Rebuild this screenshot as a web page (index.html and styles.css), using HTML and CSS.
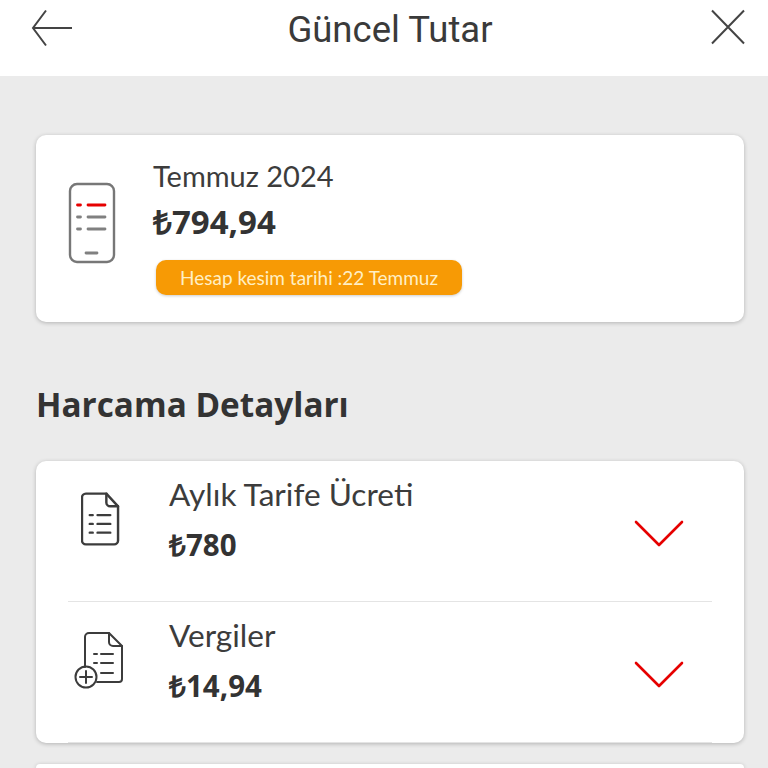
FILE: index.html
```html
<!DOCTYPE html>
<html lang="tr">
<head>
  <meta charset="UTF-8">
  <title>Güncel Tutar</title>
  <link rel="stylesheet" href="styles.css">
</head>
<body>
  <header class="topbar">
    <svg class="back-icon" width="42" height="38" viewBox="0 0 42 38" fill="none" stroke="#444" stroke-width="2">
      <path d="M41 19H2M15 1.500L2 19l13 17.500"/>
    </svg>
    <h1 class="topbar-title">Güncel Tutar</h1>
    <svg class="close-icon" width="36" height="36" viewBox="0 0 36 36" fill="none" stroke="#444" stroke-width="2">
      <path d="M2 1.500l32 33M34 1.500l-32 33"/>
    </svg>
  </header>

  <main class="content">
    <section class="card summary">
      <svg class="summary-icon" width="48" height="82" viewBox="0 0 48 82" fill="none" stroke-width="2.400" stroke-linecap="round">
        <rect x="2" y="2" width="44" height="78" rx="7" stroke="#777"/>
        <path d="M9.500 23h3M20 23h17" stroke="#e60000" stroke-width="2.800"/>
        <path d="M9.500 35h3M20 35h17M9.500 47h3M20 47h17M18 71h11" stroke="#808080" stroke-width="2.800"/>
      </svg>
      <div class="summary-text">
        <div class="summary-month">Temmuz 2024</div>
        <div class="summary-price">₺794,94</div>
        <div class="badge">Hesap kesim tarihi :22 Temmuz</div>
      </div>
    </section>

    <h2 class="section-title">Harcama Detayları</h2>

    <section class="card details">
      <div class="detail-row">
        <div class="detail-icon">
          <svg width="39" height="56" viewBox="0 0 40 56" fill="none" stroke="#3c3c3c" stroke-width="2.500" stroke-linecap="round" stroke-linejoin="round">
            <path d="M5 2h21l12 13v35a4 4 0 0 1-4 4H5a4 4 0 0 1-4-4V6a4 4 0 0 1 4-4z"/>
            <path d="M26 2v9a4 4 0 0 0 4 4h8"/>
            <path d="M9 24h3M17 24h13M9 33h3M17 33h13M9 42h3M17 42h13"/>
          </svg>
        </div>
        <div class="detail-text">
          <div class="detail-name">Aylık Tarife Ücreti</div>
          <div class="detail-price">₺780</div>
        </div>
        <svg class="chevron" width="50" height="27" viewBox="0 0 50 27" fill="none" stroke="#e60000" stroke-width="2.600" stroke-linecap="round" stroke-linejoin="round">
          <path d="M2 2l23 23L48 2"/>
        </svg>
      </div>
      <div class="detail-row">
        <div class="detail-icon">
          <svg width="50" height="58" viewBox="0 0 50 58" fill="none" stroke="#3c3c3c" stroke-width="2" stroke-linecap="round" stroke-linejoin="round">
            <path d="M11 36V6a4 4 0 0 1 4-4h20l13 13v33a3 3 0 0 1-3 3H23"/>
            <path d="M35 2v9a4 4 0 0 0 4 4h9"/>
            <path d="M20 23h3M27 23h12M20 32h3M27 32h12M27 42h12"/>
            <circle cx="12" cy="46" r="10.500"/>
            <path d="M12 40v12M6 46h12"/>
          </svg>
        </div>
        <div class="detail-text">
          <div class="detail-name">Vergiler</div>
          <div class="detail-price">₺14,94</div>
        </div>
        <svg class="chevron" width="50" height="27" viewBox="0 0 50 27" fill="none" stroke="#e60000" stroke-width="2.600" stroke-linecap="round" stroke-linejoin="round">
          <path d="M2 2l23 23L48 2"/>
        </svg>
      </div>
    </section>

    <section class="card next-card"></section>
  </main>
</body>
</html>
```

FILE: styles.css
```css
html, body {
  margin: 0;
  height: 768px;
  overflow: hidden;
}

body {
  background: #ebebeb;
  color: #333;
  font-family: "Lato", "Open Sans", sans-serif;
}

.topbar {
  height: 76px;
  background: #fff;
  display: flex;
  align-items: flex-start;
  justify-content: space-between;
  padding: 9px 22px 0 31px;
  box-sizing: border-box;
}

.topbar-title {
  margin: 1px 3px 0 0;
  font-family: "Roboto", sans-serif;
  font-size: 36.500px;
  line-height: 40px;
  font-weight: 400;
  color: #3a3a3a;
}

.content {
  padding: 59px 24px 0 36px;
}

.card {
  background: #fff;
  border-radius: 10px;
  box-shadow: 0 1px 4px rgba(0, 0, 0, 0.24);
}

.summary {
  height: 187px;
  display: flex;
  align-items: flex-start;
  padding: 47px 0 0 32px;
  box-sizing: border-box;
}

.summary-text {
  margin: -28px 0 0 37px;
}

.summary-month {
  font-size: 29px;
  line-height: 44px;
  color: #3c3c3c;
}

.summary-price {
  font-family: "Open Sans", sans-serif;
  font-size: 33px;
  line-height: 48px;
  font-weight: 700;
  color: #333;
}

.badge {
  margin: 14px 0 0 3px;
  width: 306px;
  height: 35px;
  line-height: 36px;
  border-radius: 10px;
  background: #f79a05;
  color: #ffefc4;
  font-size: 19px;
  text-align: center;
  box-shadow: 0 1px 3px rgba(0, 0, 0, 0.2);
}

.section-title {
  margin: 59px 0 34px 0;
  font-family: "Open Sans", sans-serif;
  font-size: 33.300px;
  line-height: 46px;
  font-weight: 700;
  color: #333;
}

.details {
  padding: 0 32px;
  height: 282px;
  box-sizing: border-box;
}

.detail-row {
  height: 140px;
  display: flex;
  border-bottom: 1px solid #e4e4e4;
}

.detail-icon {
  width: 101px;
  padding: 30px 0 0 13px;
  box-sizing: border-box;
}

.detail-row + .detail-row .detail-icon {
  padding: 29px 0 0 6px;
}

.detail-text {
  flex: 1;
  padding-top: 10px;
}

.detail-name {
  font-size: 31.600px;
  line-height: 46px;
  color: #3c3c3c;
}

.detail-price {
  margin-top: 6px;
  font-family: "Open Sans", sans-serif;
  font-size: 29.500px;
  line-height: 44px;
  font-weight: 700;
  color: #333;
}

.chevron {
  margin: 59px 28px 0 0;
}

.next-card {
  margin-top: 21px;
  height: 4px;
  border-radius: 10px 10px 0 0;
}
```
